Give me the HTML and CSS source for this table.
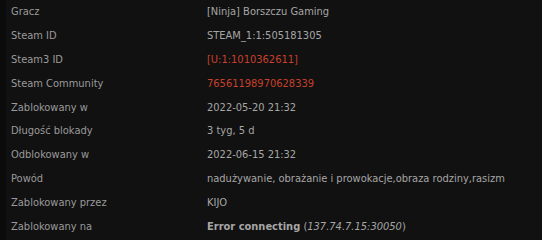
FILE: index.html
```html
<!DOCTYPE html>
<html lang="pl">
<head>
<meta charset="utf-8">
<link rel="stylesheet" href="styles.css">
</head>
<body>
<div class="panel">
  <dl class="info">
    <dt class="label">Gracz</dt><dd class="value">[Ninja] Borszczu Gaming</dd>
    <dt class="label">Steam ID</dt><dd class="value">STEAM_1:1:505181305</dd>
    <dt class="label">Steam3 ID</dt><dd class="value red">[U:1:1010362611]</dd>
    <dt class="label">Steam Community</dt><dd class="value red">76561198970628339</dd>
    <dt class="label">Zablokowany w</dt><dd class="value">2022-05-20 21:32</dd>
    <dt class="label">Długość blokady</dt><dd class="value">3 tyg, 5 d</dd>
    <dt class="label">Odblokowany w</dt><dd class="value">2022-06-15 21:32</dd>
    <dt class="label">Powód</dt><dd class="value">nadużywanie, obrażanie i prowokacje,obraza rodziny,rasizm</dd>
    <dt class="label">Zablokowany przez</dt><dd class="value">KIJO</dd>
    <dt class="label">Zablokowany na</dt><dd class="value"><b>Error connecting</b> (<i>137.74.7.15:30050</i>)</dd>
  </dl>
</div>
</body>
</html>
```
FILE: styles.css
```css
html, body {
  margin: 0;
  padding: 0;
  background: #0b0b0b;
}
body {
  font-family: "DejaVu Sans Condensed", "DejaVu Sans", Verdana, sans-serif;
  font-size: 11px;
  color: #999;
}
.panel {
  margin-left: 6px;
  height: 240px;
  background: #111111;
}
.info {
  margin: 0;
  display: grid;
  grid-template-columns: 196px 1fr;
  grid-auto-rows: 23.9px;
  align-items: center;
}
.label, .value {
  margin: 0;
  padding-left: 5px;
  line-height: 14px;
  white-space: nowrap;
}
.label {
  color: #9a9a9a;
}
.value {
  color: #a6a6a6;
}
.red {
  color: #c9402c;
}
```
